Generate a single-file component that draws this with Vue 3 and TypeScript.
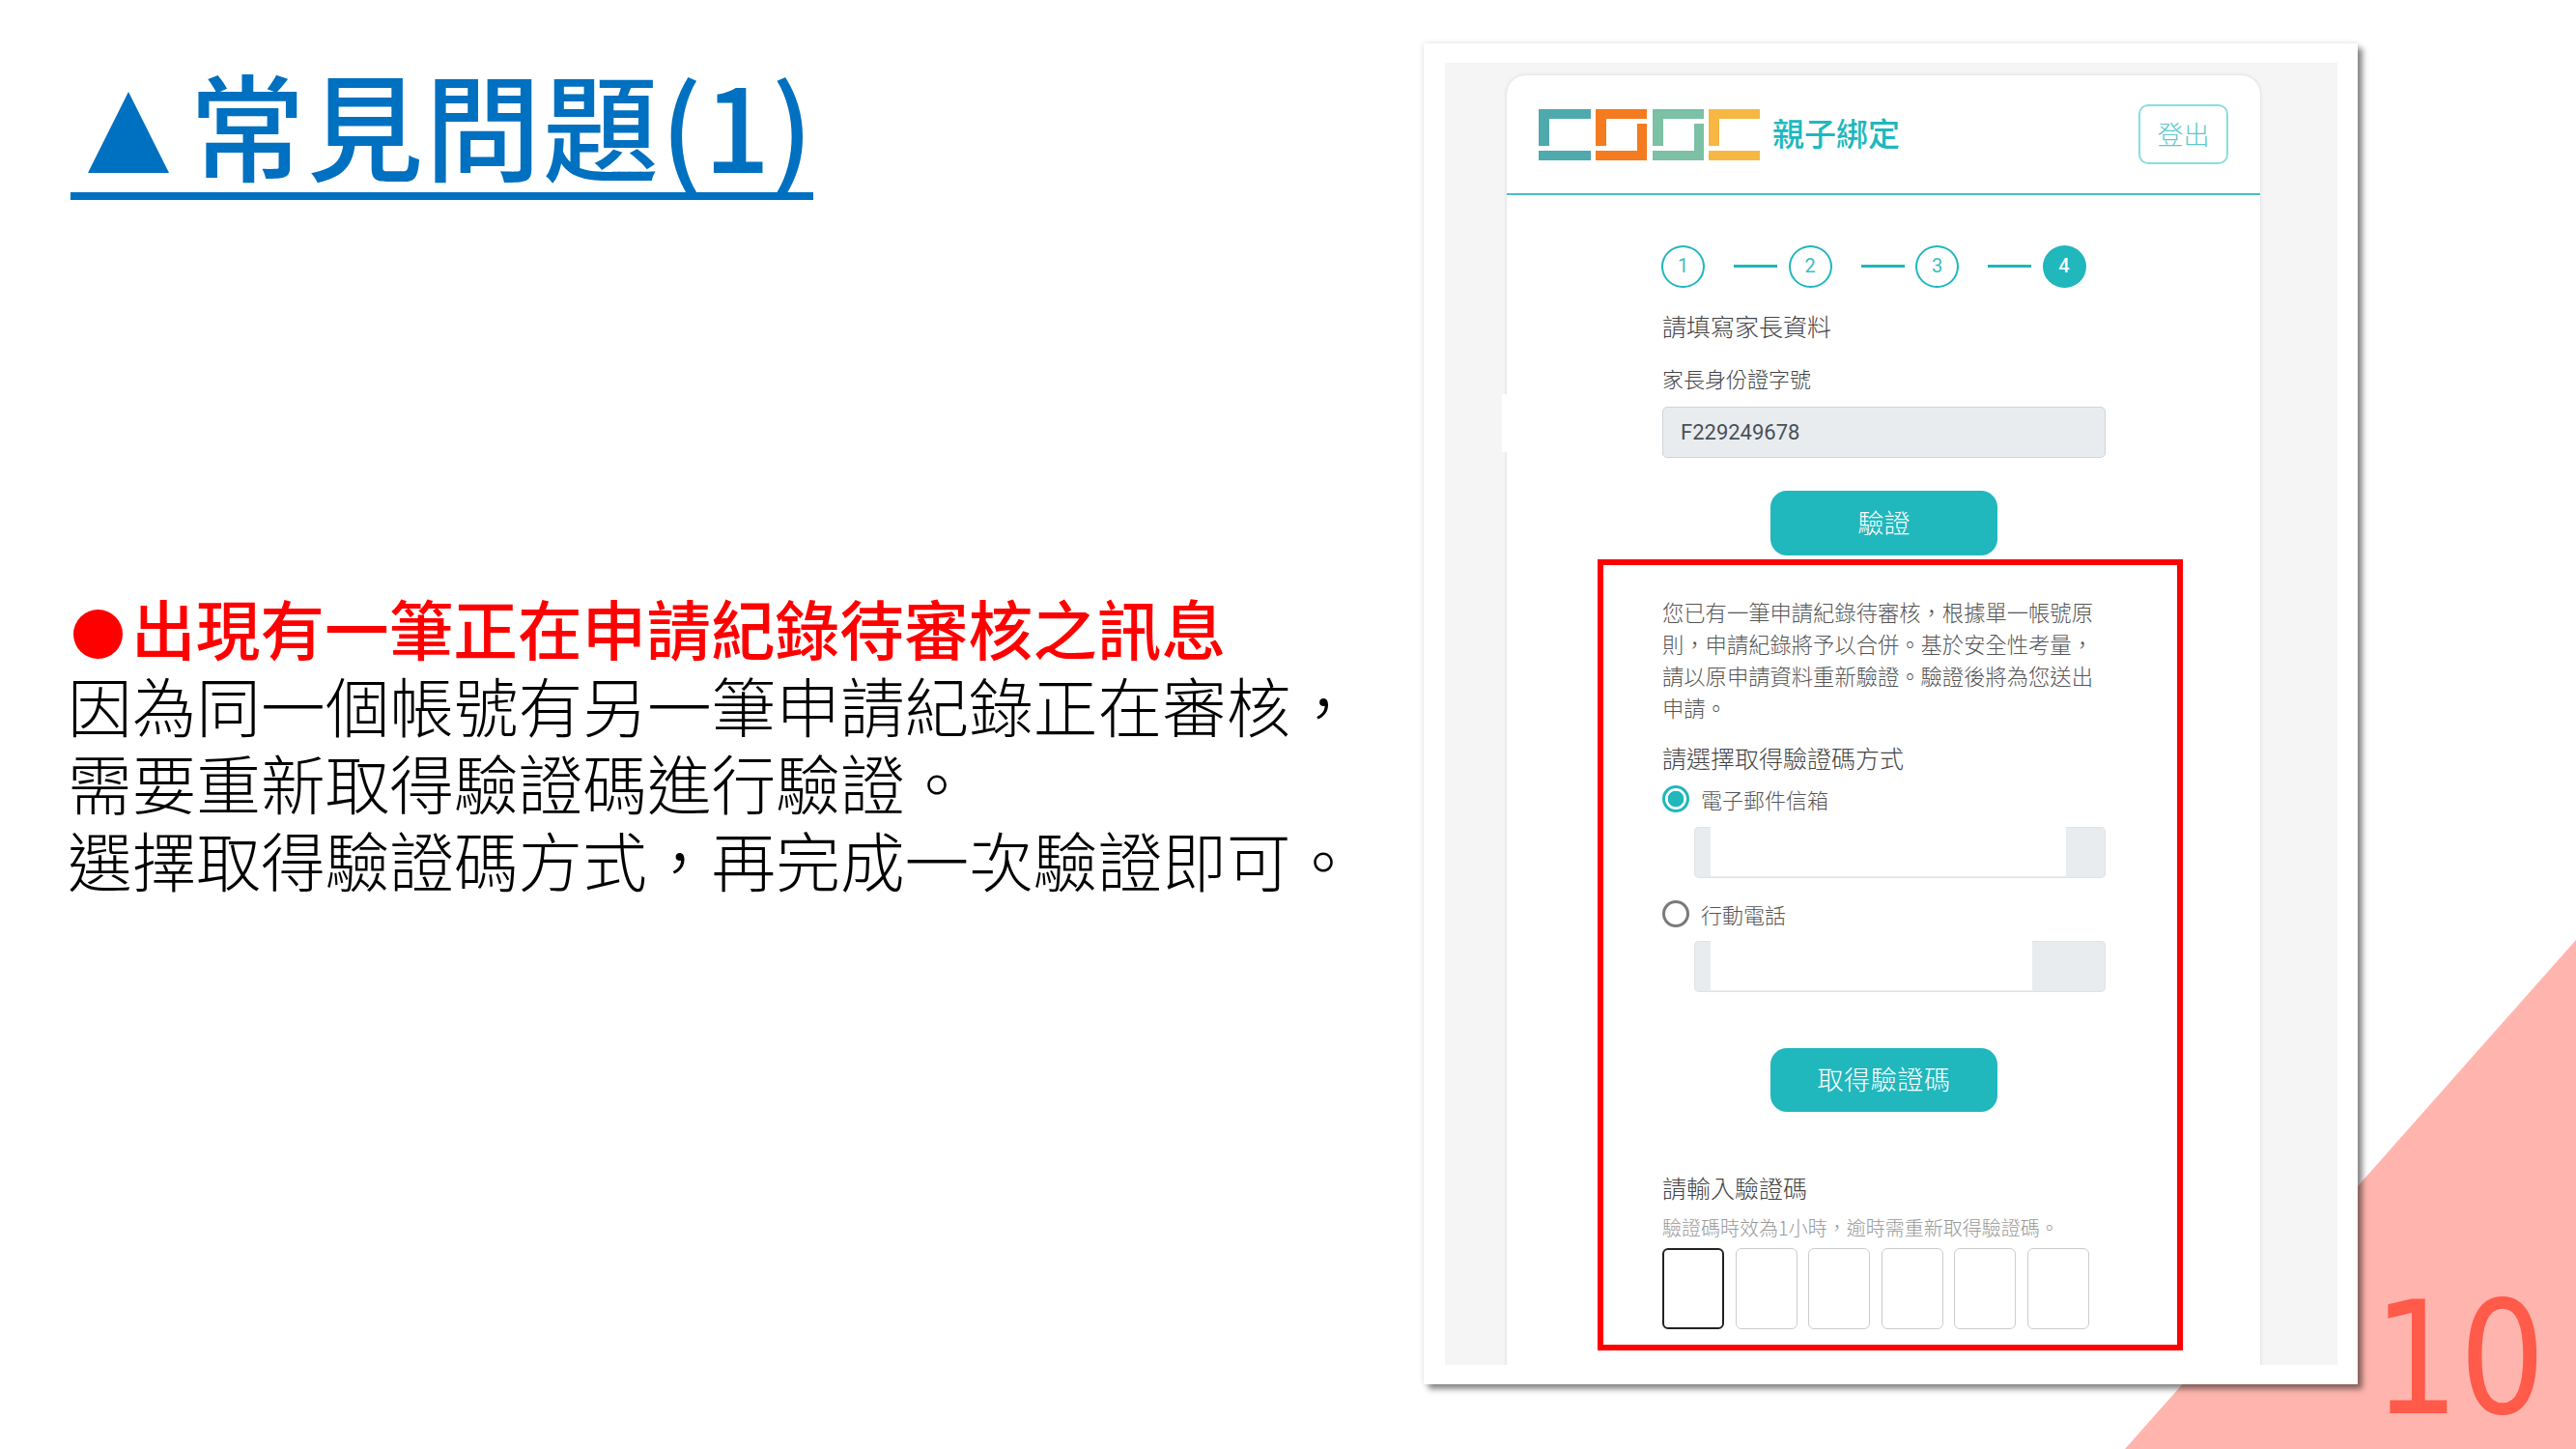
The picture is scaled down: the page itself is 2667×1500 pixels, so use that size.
<script setup lang="ts">
const codeBoxes: number[] = [0, 1, 2, 3, 4, 5]
const steps: number[] = [1, 2, 3]
</script>

<template>
  <div class="slide">
    <div class="corner"></div>
    <div class="page-no">10</div>

    <section class="left">
      <h1 class="title">
        <span class="tri"></span>
        <span class="title-text">常見問題(1)</span>
      </h1>
      <div class="body">
        <p class="red"><span class="dot"></span>出現有一筆正在申請紀錄待審核之訊息</p>
        <p>因為同一個帳號有另一筆申請紀錄正在審核&#xFF0C;</p>
        <p>需要重新取得驗證碼進行驗證。</p>
        <p>選擇取得驗證碼方式&#xFF0C;再完成一次驗證即可。</p>
      </div>
    </section>

    <section class="shot">
      <div class="grey">
        <div class="card">
          <header class="head">
            <div class="brand">
              <svg class="logo" viewBox="0 0 229 53" width="229" height="53">
                <path fill="#4eaaad" d="M0 0H54V10H11V38H0ZM0 43H54V53H0Z" />
                <path fill="#f47b20" d="M59 0H112V10H70V38H59ZM102 15H112V53H59V43H102Z" />
                <path fill="#7cc0a6" d="M118 0H171V10H129V38H118ZM161 15H171V53H118V43H161Z" />
                <path fill="#f6b843" d="M176 0H229V10H187V38H176ZM176 43H229V53H176Z" />
              </svg>
              <span class="brand-name">親子綁定</span>
            </div>
            <div class="logout">登出</div>
          </header>

          <div class="content">
            <div class="steps">
              <template v-for="n in steps" :key="n">
                <span class="step">{{ n }}</span>
                <span class="step-line"></span>
              </template>
              <span class="step on">4</span>
            </div>

            <div class="h25 mt-fill">請填寫家長資料</div>
            <div class="label">家長身份證字號</div>
            <div class="id-input">F229249678</div>
            <div class="btn btn-verify">驗證</div>

            <p class="notice">
              您已有一筆申請紀錄待審核&#xFF0C;根據單一帳號原則&#xFF0C;申請紀錄將予以合併。基於安全性考量&#xFF0C;請以原申請資料重新驗證。驗證後將為您送出申請。
            </p>

            <div class="h25 mt-select">請選擇取得驗證碼方式</div>
            <div class="radio-row first">
              <span class="radio checked"></span>
              <span>電子郵件信箱</span>
            </div>
            <div class="group g-mail">
              <span class="pre"></span>
              <span class="field"></span>
              <span class="addon addon-mail"></span>
            </div>
            <div class="radio-row second">
              <span class="radio"></span>
              <span>行動電話</span>
            </div>
            <div class="group g-phone">
              <span class="pre"></span>
              <span class="field"></span>
              <span class="addon addon-phone"></span>
            </div>
            <div class="btn btn-get">取得驗證碼</div>

            <div class="h25 mt-code">請輸入驗證碼</div>
            <div class="hint">驗證碼時效為1小時&#xFF0C;逾時需重新取得驗證碼。</div>
            <div class="codes">
              <span v-for="i in codeBoxes" :key="i" class="code" :class="{ focus: i === 0 }"></span>
            </div>
          </div>
        </div>
        <div class="notch"></div>
      </div>
      <div class="redbox"></div>
    </section>
  </div>
</template>

<style>
html,
body {
  margin: 0;
  background: #fff;
}
</style>

<style scoped>
.slide {
  position: relative;
  width: 2667px;
  height: 1500px;
  overflow: hidden;
  background: #fff;
  display: flex;
  align-items: flex-start;
  font-family: "Noto Sans CJK TC", "Noto Sans", sans-serif;
  color: #000;
}
.corner {
  position: absolute;
  inset: 0;
  background: #ffb5ae;
  clip-path: polygon(2667px 973px, 2667px 1500px, 2200px 1500px);
}
.page-no {
  position: absolute;
  left: 2451px;
  top: 1312px;
  font-family: "DejaVu Sans", sans-serif;
  font-size: 163px;
  line-height: 190px;
  color: #ff5a4a;
  transform: scaleX(0.86);
  transform-origin: left top;
  margin-left: 6px;
}
.left {
  position: relative;
  width: 1474px;
  flex: none;
}
.title {
  display: flex;
  align-items: flex-start;
  box-sizing: content-box;
  width: 751px;
  height: 137px;
  margin: 62px 0 0 73px;
  padding-left: 18px;
  border-bottom: 8px solid #0070c0;
  color: #0070c0;
  font-weight: 500;
  font-size: 120px;
  line-height: 137px;
  white-space: nowrap;
}
.tri {
  flex: none;
  width: 84px;
  height: 84px;
  margin: 33px 21px 0 0;
  background: #0070c0;
  clip-path: polygon(50% 0, 100% 100%, 0 100%);
}
.title-text {
  margin-top: -3px;
  letter-spacing: 2px;
}
.body {
  margin: 402px 0 0 70px;
  font-size: 66.67px;
  line-height: 80px;
  white-space: nowrap;
}
.body p {
  margin: 0;
  font-weight: 300;
}
.body p.red {
  color: #f00;
  font-weight: 500;
}
.dot {
  display: inline-block;
  width: 51px;
  height: 51px;
  margin: 0 9px 0 6px;
  border-radius: 50%;
  background: #f00;
  vertical-align: -4px;
}

.shot {
  position: relative;
  flex: none;
  box-sizing: border-box;
  width: 967px;
  height: 1388px;
  margin-top: 45px;
  padding: 20px 21px 20px 22px;
  background: #fff;
  box-shadow: 5px 5px 6px rgba(0, 0, 0, 0.45), 0 0 6px rgba(0, 0, 0, 0.12);
}
.grey {
  position: relative;
  height: 1348px;
  overflow: hidden;
  background: #f5f5f5;
  padding: 13px 0 0 64px;
  box-sizing: border-box;
}
.card {
  width: 780px;
  height: 1400px;
  background: #fff;
  border-radius: 20px 20px 0 0;
  box-shadow: 0 0 4px rgba(0, 0, 0, 0.12);
}
.notch {
  position: absolute;
  left: 59px;
  top: 343px;
  width: 6px;
  height: 60px;
  background: #fff;
}
.head {
  box-sizing: content-box;
  height: 122px;
  display: flex;
  align-items: center;
  justify-content: space-between;
  padding: 0 33px;
  border-bottom: 2px solid #45bfc4;
}
.brand {
  display: flex;
  align-items: center;
}
.logo {
  display: block;
  flex: none;
}
.brand-name {
  margin: -5px 0 0 13px;
  font-size: 33px;
  line-height: 40px;
  font-weight: 500;
  color: #20b7bd;
}
.logout {
  box-sizing: border-box;
  width: 93px;
  height: 62px;
  border: 2px solid #8adde0;
  border-radius: 10px;
  font-size: 27px;
  font-weight: 300;
  line-height: 58px;
  text-align: center;
  color: #5cc8cd;
}
.content {
  padding-left: 161px;
  width: 459px;
  color: #495057;
}
.steps {
  display: flex;
  align-items: center;
  height: 44px;
  margin: 52px 0 0 -1px;
}
.step {
  box-sizing: border-box;
  flex: none;
  width: 45px;
  height: 44px;
  border: 2.5px solid #20b7bd;
  border-radius: 50%;
  font-family: Roboto, sans-serif;
  font-size: 20px;
  line-height: 39px;
  text-align: center;
  color: #3bbdc2;
}
.step.on {
  background: #20b7bd;
  color: #fff;
  font-weight: 500;
}
.step-line {
  flex: none;
  width: 45px;
  height: 3px;
  margin: -1px 11.5px 0 30px;
  background: #20b7bd;
}
.h25 {
  font-size: 25px;
  line-height: 36px;
  font-weight: 300;
  color: #444;
}
.mt-fill {
  margin-top: 21px;
}
.label {
  margin-top: 20px;
  font-size: 22px;
  line-height: 32px;
  font-weight: 300;
  color: #444;
}
.id-input {
  box-sizing: border-box;
  height: 53px;
  margin-top: 14px;
  padding-left: 18px;
  border: 1.5px solid #ced4da;
  border-radius: 5px;
  background: #e9ecef;
  font-family: Roboto, sans-serif;
  font-size: 22px;
  line-height: 52px;
  color: #495057;
}
.btn {
  width: 235px;
  margin-left: 112px;
  border-radius: 17px;
  background: #20b7bd;
  color: #fff;
  font-size: 27px;
  font-weight: 300;
  text-align: center;
}
.btn-verify {
  height: 67px;
  margin-top: 34px;
  line-height: 65px;
}
.btn-get {
  height: 66px;
  margin-top: 58px;
  line-height: 64px;
  letter-spacing: 0.6px;
}
.notice {
  margin: 42px 0 0;
  font-size: 22.3px;
  line-height: 33px;
  font-weight: 300;
  color: #555;
}
.mt-select {
  margin-top: 17px;
}
.radio-row {
  display: flex;
  align-items: center;
  gap: 12px;
  height: 28px;
  font-size: 22px;
  font-weight: 300;
  color: #555;
}
.radio-row.first {
  margin-top: 11px;
}
.radio-row.second {
  margin-top: 23px;
}
.radio {
  box-sizing: border-box;
  flex: none;
  width: 28px;
  height: 28px;
  border: 3px solid #7a7a7a;
  border-radius: 50%;
}
.radio.checked {
  border-color: #20b7bd;
  background: radial-gradient(circle, #20b7bd 0 8px, #fff 8.6px);
}
.group {
  display: flex;
  box-sizing: border-box;
  width: 426px;
  height: 53px;
  margin-left: 33px;
  border-radius: 5px;
  overflow: hidden;
  background: #e9ecef;
  box-shadow: inset 0 0 0 1px #dfe3e7;
}
.g-mail {
  margin-top: 15px;
}
.g-phone {
  margin-top: 14px;
}
.pre {
  flex: none;
  width: 17px;
}
.field {
  flex: 1;
  margin-bottom: 2px;
  background: #fff;
}
.addon {
  flex: none;
}
.addon-mail {
  width: 41px;
}
.addon-phone {
  width: 76px;
}
.mt-code {
  margin-top: 60px;
}
.hint {
  margin-top: 11px;
  font-size: 20px;
  line-height: 26px;
  font-weight: 300;
  color: #999;
  white-space: nowrap;
}
.codes {
  display: flex;
  gap: 11.5px;
  margin-top: 8px;
}
.code {
  box-sizing: border-box;
  flex: none;
  width: 64px;
  height: 84px;
  border: 1.5px solid #ccc;
  border-radius: 6px;
}
.code.focus {
  border: 2.5px solid #222;
}
.redbox {
  position: absolute;
  left: 180px;
  top: 534px;
  box-sizing: border-box;
  width: 606px;
  height: 819px;
  border: 6px solid #f00;
}
</style>
